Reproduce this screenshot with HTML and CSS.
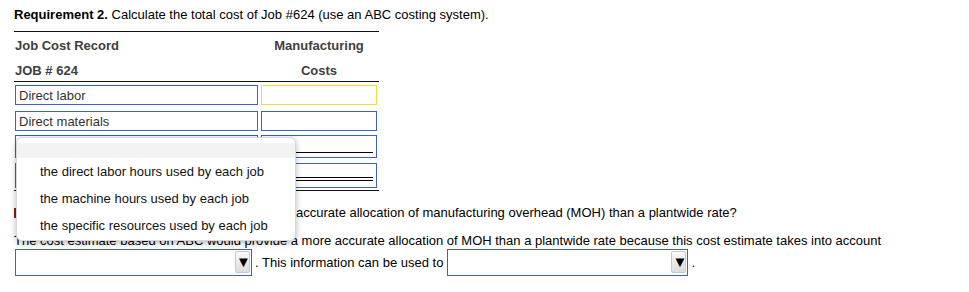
FILE: index.html
```html
<!DOCTYPE html>
<html>
<head>
<meta charset="utf-8">
<link rel="stylesheet" href="styles.css">
</head>
<body>
<div class="page">
  <div class="title"><b>Requirement 2.</b> Calculate the total cost of Job #624 (use an ABC costing system).</div>
  <div class="record">
    <div class="head">
      <div class="hrow"><span class="hl">Job Cost Record</span><span class="hr">Manufacturing</span></div>
      <div class="hrow second"><span class="hl">JOB # 624</span><span class="hr">Costs</span></div>
    </div>
    <div class="rows">
      <div class="row r1"><div class="cell lab">Direct labor</div><div class="cell amt focus"></div></div>
      <div class="row r2"><div class="cell lab">Direct materials</div><div class="cell amt"></div></div>
      <div class="row r3"><div class="cell lab"></div><div class="cell amt"><span class="uline"></span></div></div>
      <div class="row r4"><div class="cell lab plain"></div><div class="cell amt"><span class="dline"></span></div></div>
    </div>
  </div>
  <div class="q1"><span class="mark"></span><span class="hid">Why would ABC provide a more</span> accurate allocation of manufacturing overhead (MOH) than a plantwide rate?</div>
  <div class="q2">The cost estimate based on ABC would provide a more accurate allocation of MOH than a plantwide rate because this cost estimate takes into account</div>
  <div class="q3">
    <div class="sel wide"><span class="arrow">&#9660;</span></div>
    <span class="txt">. This information can be used to</span>
    <div class="sel wide2"><span class="arrow">&#9660;</span></div>
    <span class="txt">.</span>
  </div>

  <div class="popup">
    <div class="opt blank"></div>
    <div class="opt">the direct labor hours used by each job</div>
    <div class="opt">the machine hours used by each job</div>
    <div class="opt">the specific resources used by each job</div>
  </div>
</div>
</body>
</html>
```
FILE: styles.css
```css
* { box-sizing: border-box; }
html, body { margin: 0; padding: 0; background: #fff; }
body { font-family: "Liberation Sans", Arial, sans-serif; font-size: 13px; color: #000; }
.page { position: relative; padding: 7px 0 0 14px; width: 969px; height: 292px; }
.title { height: 16px; line-height: 16px; margin-bottom: 8px; white-space: nowrap; }
.record { width: 365px; border-top: 1px solid #111; }
.head { height: 50px; border-bottom: 1px solid #111; padding-top: 6px; }
.hrow { display: flex; height: 16px; line-height: 16px; font-weight: bold; font-size: 13px; color: #404040; }
.hrow.second { margin-top: 9px; }
.hl { width: 246px; padding-left: 1px; }
.hr { width: 118px; text-align: center; }
.rows { padding-top: 3px; border-bottom: 1px solid #111; padding-bottom: 2px; }
.row { display: flex; gap: 3px; padding-left: 1px; }
.r1 { height: 20px; }
.r2 { height: 20px; margin-top: 6px; }
.r3 { height: 23px; margin-top: 4px; }
.r4 { height: 25px; margin-top: 5px; }
.cell { border: 1px solid #3b5fcc; height: 100%; }
.lab { width: 243px; padding-left: 3px; line-height: 19px; color: #333; font-size: 13px; }
.amt { width: 116px; position: relative; display: flex; flex-direction: column; justify-content: flex-end; padding: 0 3px 4px 1px; }
.amt.focus { border-color: #f2dd3a; }
.uline { display: block; height: 2px; border-bottom: 1.5px solid #000; }
.dline { display: block; height: 4px; border-top: 1.5px solid #000; border-bottom: 1.5px solid #000; margin-bottom: 2px; }
.q1 { margin-top: 14px; height: 16px; line-height: 16px; white-space: nowrap; display: flex; align-items: center; }
.mark { display: inline-block; width: 2px; height: 10px; background: #8b1a1a; margin-right: 1px; }
.hid { display: inline-block; width: 279px; white-space: nowrap; }
.q2 { margin-top: 12px; height: 16px; line-height: 16px; white-space: nowrap; }
.q3 { margin-top: -1px; display: flex; align-items: center; height: 28px; padding-left: 1px; }
.sel { height: 27px; border: 1px solid #3b5fcc; position: relative; background: #fff; display: flex; align-items: center; justify-content: flex-end; padding-right: 1px; }
.wide { width: 237px; }
.wide2 { width: 241px; margin-left: 4px; }
.arrow { width: 15px; height: 22px; border: 1px solid #c9c9c9; border-radius: 2px; background: linear-gradient(#fafafa, #dcdcdc); font-size: 15px; line-height: 20px; text-align: center; color: #000; }
.txt { margin-left: 3px; }
.popup { position: absolute; left: 16px; top: 137px; width: 280px; height: 104px; background: #fff; border: 1px solid #d8d8d8; border-radius: 6px; box-shadow: 0 2px 6px rgba(0,0,0,0.28); padding-top: 5px; overflow: hidden; }
.opt { height: 27px; line-height: 27px; padding-left: 23px; white-space: nowrap; color: #111; }
.opt.blank { height: 15px; background: #f3f3f3; }
```
